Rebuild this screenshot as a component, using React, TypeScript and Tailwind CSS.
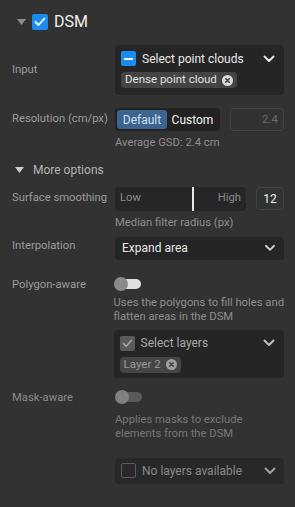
import React from "react";

const Chevron = ({ className = "" }: { className?: string }) => (
  <svg width="12" height="8" viewBox="0 0 12 8" className={className}>
    <path d="M1.5 1.5 L6 6 L10.5 1.5" stroke="currentColor" strokeWidth="2" fill="none" strokeLinecap="round" strokeLinejoin="round" />
  </svg>
);

const XCircle = () => (
  <svg width="11" height="11" viewBox="0 0 12 12">
    <circle cx="6" cy="6" r="6" fill="#d9d9d9" />
    <path d="M4 4 L8 8 M8 4 L4 8" stroke="#3f3f3f" strokeWidth="1.6" strokeLinecap="round" />
  </svg>
);

const Tri = ({ className = "" }: { className?: string }) => (
  <svg width="9" height="6" viewBox="0 0 9 6" className={className}>
    <path d="M0 0 L9 0 L4.5 6 Z" fill="currentColor" />
  </svg>
);

export default function App() {
  return (
    <div
      className="w-[295px] h-[507px] bg-[#323232] text-[#e6e6e6] overflow-hidden"
      style={{ fontFamily: "Roboto, 'Noto Sans', sans-serif" }}
    >
      {/* header */}
      <div className="flex items-center pl-[17px] pt-[13px] h-[30px]">
        <Tri className="text-[#8c8c8c]" />
        <div className="ml-[6px] w-[16px] h-[16px] rounded-[2px] bg-[#1a8cf0] flex items-center justify-center">
          <svg width="12" height="10" viewBox="0 0 12 10">
            <path d="M1.5 5 L4.5 8 L10.5 1.5" stroke="white" strokeWidth="1.8" fill="none" strokeLinecap="round" strokeLinejoin="round" />
          </svg>
        </div>
        <span className="ml-[6px] text-[16px] leading-[18px] text-[#eeeeee]">DSM</span>
      </div>

      {/* Input */}
      <div className="flex mt-[15px] pl-[12px] pr-[11px]">
        <div className="w-[103px] text-[11.25px] text-[#9c9c9c] pt-[17px]">Input</div>
        <div className="flex-1 h-[50px] rounded-[4px] bg-[#252525] px-[6px] pt-[6px]">
          <div className="flex items-center h-[15px]">
            <div className="w-[15px] h-[15px] rounded-[2px] bg-[#1a8cf0] flex items-center justify-center">
              <div className="w-[9px] h-[2px] bg-white" />
            </div>
            <span className="ml-[6px] text-[12px] text-[#e8e8e8]">Select point clouds</span>
            <Chevron className="ml-auto mr-[3px] text-[#e8e8e8]" />
          </div>
          <div className="mt-[6px] inline-flex items-center h-[16px] rounded-[4px] bg-[#444444] pl-[4px] pr-[4px]">
            <span className="text-[11.5px] text-[#e0e0e0]">Dense point cloud</span>
            <span className="ml-[5px] flex"><XCircle /></span>
          </div>
        </div>
      </div>

      {/* Resolution */}
      <div className="flex mt-[13px] pl-[12px] pr-[11px]">
        <div className="w-[103px] text-[11.25px] text-[#9c9c9c] pt-[3px]">Resolution (cm/px)</div>
        <div className="flex-1">
          <div className="flex items-center">
            <div className="flex h-[23px] rounded-[4px] bg-[#222222] p-[2px]">
              <div className="w-[50px] rounded-[3px] bg-[#3b6590] text-[12px] text-[#cfe0f0] flex items-center justify-center">Default</div>
              <div className="w-[51px] text-[12px] text-[#f2f2f2] flex items-center justify-center">Custom</div>
            </div>
            <div className="ml-auto w-[54px] h-[23px] rounded-[4px] border border-[#444444] flex items-center justify-end pr-[5px] text-[11.5px] text-[#6a6a6a]">2.4</div>
          </div>
          <div className="mt-[4px] text-[11.25px] text-[#8e8e8e]">Average GSD: 2.4 cm</div>
        </div>
      </div>

      {/* More options */}
      <div className="flex items-center mt-[9px] pl-[15px]">
        <Tri className="text-[#cccccc]" />
        <span className="ml-[9px] text-[12px] text-[#b5b5b5]">More options</span>
      </div>

      {/* Surface smoothing */}
      <div className="flex mt-[8px] pl-[12px] pr-[11px]">
        <div className="w-[103px] text-[11.25px] text-[#9c9c9c] pt-[3px]">Surface smoothing</div>
        <div className="flex-1">
          <div className="flex items-center">
            <div className="relative flex items-center w-[131px] h-[24px] rounded-[4px] bg-[#262626] px-[5px]">
              <span className="text-[11.25px] text-[#8a8a8a]">Low</span>
              <span className="ml-auto text-[11.25px] text-[#8a8a8a]">High</span>
              <div className="absolute left-[77px] top-0 w-[2px] h-[24px] bg-[#e8e8e8]" />
            </div>
            <div className="ml-auto w-[28px] h-[23px] rounded-[4px] border border-[#444444] flex items-center justify-center text-[12px] text-[#eeeeee]">12</div>
          </div>
          <div className="mt-[4px] text-[11.25px] text-[#8e8e8e]">Median filter radius (px)</div>
        </div>
      </div>

      {/* Interpolation */}
      <div className="flex mt-[5px] pl-[12px] pr-[11px]">
        <div className="w-[103px] text-[11.25px] text-[#9c9c9c] pt-[1px]">Interpolation</div>
        <div className="flex-1 flex items-center h-[23px] rounded-[4px] bg-[#252525] pl-[7px] pr-[8px]">
          <span className="text-[12px] text-[#e8e8e8]">Expand area</span>
          <Chevron className="ml-auto text-[#d0d0d0] scale-90" />
        </div>
      </div>

      {/* Polygon-aware */}
      <div className="flex mt-[17px] pl-[12px] pr-[11px]">
        <div className="w-[103px] text-[11.25px] text-[#9c9c9c]">Polygon-aware</div>
        <div className="flex-1">
          <div className="relative w-[28px] h-[12px] mt-[1px]">
            <div className="absolute left-[4px] top-[1px] w-[23px] h-[10px] rounded-full bg-[#e0e0e0]" />
            <div className="absolute left-0 top-[-1px] w-[14px] h-[14px] rounded-full bg-[#8a8a8a]" />
          </div>
          <div className="mt-[6px] text-[11.25px] leading-[14px] text-[#8e8e8e] whitespace-nowrap">
            Uses the polygons to fill holes and<br />flatten areas in the DSM
          </div>
          <div className="mt-[6px] h-[48px] rounded-[4px] bg-[#252525] px-[6px] pt-[6px]">
            <div className="flex items-center h-[15px]">
              <div className="w-[15px] h-[15px] rounded-[2px] bg-[#5a5a5a] flex items-center justify-center">
                <svg width="11" height="9" viewBox="0 0 12 10">
                  <path d="M1.5 5 L4.5 8 L10.5 1.5" stroke="#a8a8a8" strokeWidth="1.6" fill="none" strokeLinecap="round" strokeLinejoin="round" />
                </svg>
              </div>
              <span className="ml-[6px] text-[12px] text-[#a8a8a8]">Select layers</span>
              <Chevron className="ml-auto mr-[3px] text-[#bdbdbd]" />
            </div>
            <div className="mt-[6px] inline-flex items-center h-[16px] rounded-[4px] bg-[#454545] pl-[4px] pr-[4px]">
              <span className="text-[11.5px] text-[#9a9a9a]">Layer 2</span>
              <span className="ml-[5px] flex opacity-60"><XCircle /></span>
            </div>
          </div>
        </div>
      </div>

      {/* Mask-aware */}
      <div className="flex mt-[12px] pl-[12px] pr-[11px]">
        <div className="w-[103px] text-[11.25px] text-[#8a8a8a]">Mask-aware</div>
        <div className="flex-1">
          <div className="relative w-[28px] h-[12px] mt-[1px]">
            <div className="absolute left-[4px] top-[1px] w-[23px] h-[10px] rounded-full bg-[#5a5a5a]" />
            <div className="absolute left-0 top-[-1px] w-[14px] h-[14px] rounded-full bg-[#808080]" />
          </div>
          <div className="mt-[10px] text-[11.25px] leading-[14px] text-[#777777]">
            Applies masks to exclude<br />elements from the DSM
          </div>
          <div className="mt-[17px] flex items-center h-[26px] rounded-[4px] bg-[#282828] pl-[6px] pr-[8px]">
            <div className="w-[15px] h-[15px] rounded-[2px] border border-[#5c5c5c]" />
            <span className="ml-[6px] text-[12px] text-[#8a8a8a]">No layers available</span>
            <Chevron className="ml-auto text-[#a0a0a0]" />
          </div>
        </div>
      </div>
    </div>
  );
}
